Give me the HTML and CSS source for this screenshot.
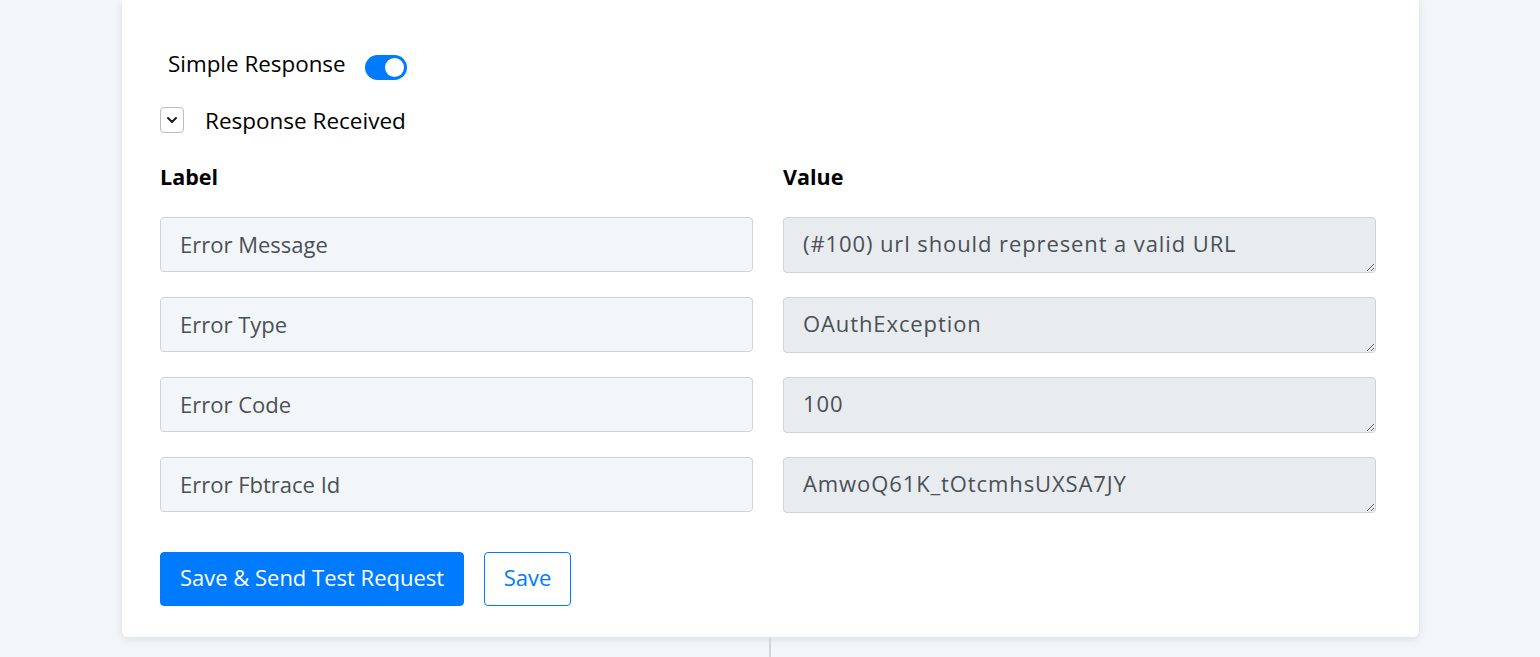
FILE: index.html
```html
<!DOCTYPE html>
<html lang="en">
<head>
<meta charset="utf-8">
<title>Response</title>
<link rel="stylesheet" href="styles.css">
</head>
<body>
<div class="page">
  <section class="card">
    <div class="toggle-row">
      <span class="toggle-label">Simple Response</span>
      <span class="switch" role="switch" aria-checked="true"><span class="knob"></span></span>
    </div>
    <div class="collapse-row">
      <button class="collapse-btn" type="button" aria-label="Collapse">
        <svg width="12" height="8" viewBox="0 0 12 8"><path d="M2 2 L6 6 L10 2" fill="none" stroke="#1a1a1a" stroke-width="2" stroke-linecap="round" stroke-linejoin="round"/></svg>
      </button>
      <span class="collapse-title">Response Received</span>
    </div>
    <div class="grid">
      <div class="col-head">Label</div>
      <div class="col-head">Value</div>

      <input class="field" type="text" value="Error Message">
      <textarea class="value" readonly>(#100) url should represent a valid URL</textarea>

      <input class="field" type="text" value="Error Type">
      <textarea class="value" readonly>OAuthException</textarea>

      <input class="field" type="text" value="Error Code">
      <textarea class="value" readonly>100</textarea>

      <input class="field" type="text" value="Error Fbtrace Id">
      <textarea class="value" readonly>AmwoQ61K_tOtcmhsUXSA7JY</textarea>
    </div>
    <div class="actions">
      <button class="btn btn-primary" type="button">Save &amp; Send Test Request</button>
      <button class="btn btn-outline" type="button">Save</button>
    </div>
  </section>
  <div class="connector"></div>
</div>
</body>
</html>
```

FILE: styles.css
```css
* { box-sizing: border-box; }

html, body {
  margin: 0;
  height: 100%;
}

body {
  background: #f3f6f9;
  font-family: "Open Sans", "Lato", sans-serif;
  color: #000;
  overflow: hidden;
}

.page {
  padding-left: 122px;
}

.card {
  width: 1297px;
  background: #fff;
  border-radius: 0 0 6px 6px;
  box-shadow: 0 2px 8px rgba(40, 55, 80, 0.12);
  padding: 50px 43px 31px 38px;
}

.toggle-row {
  display: flex;
  align-items: center;
  gap: 19px;
  padding-left: 8px;
  height: 30px;
}

.toggle-label {
  font-size: 22.4px;
  margin-top: -3px;
}

.switch {
  position: relative;
  display: inline-block;
  width: 42px;
  height: 25px;
  border-radius: 13px;
  background: #007bff;
  margin-top: 4px;
}

.knob {
  position: absolute;
  top: 3px;
  right: 3px;
  width: 19px;
  height: 19px;
  border-radius: 50%;
  background: #fff;
}

.collapse-row {
  display: flex;
  align-items: center;
  gap: 21px;
  margin-top: 27px;
  height: 26px;
}

.collapse-btn {
  width: 24px;
  height: 26px;
  border: 1px solid #b8bec6;
  border-radius: 4px;
  background: #fff;
  padding: 0;
  display: flex;
  align-items: center;
  justify-content: center;
}

.collapse-title {
  font-size: 22.5px;
  margin-top: 1px;
}

.grid {
  display: grid;
  grid-template-columns: 593px 593px;
  column-gap: 30px;
  row-gap: 24px;
  align-items: start;
  margin-top: 30px;
}

.col-head {
  font-size: 21.5px;
  font-weight: 700;
  height: 30px;
  line-height: 28px;
}

.field, .value {
  font-family: inherit;
  font-size: 22px;
  color: #495057;
  border: 1px solid #ced4da;
  border-radius: 4px;
  padding: 0 19px;
  margin: 0;
  outline: none;
}

.field {
  height: 55px;
  background: #f3f6f9;
  padding-bottom: 2px;
}

.value {
  height: 56px;
  background: #e9ecef;
  padding-top: 10px;
  line-height: 30px;
  letter-spacing: 0.9px;
  resize: vertical;
  overflow: hidden;
}

.actions {
  display: flex;
  gap: 20px;
  margin-top: 39px;
}

.btn {
  font-family: inherit;
  font-size: 22px;
  height: 54px;
  border-radius: 4px;
  padding: 0 10px 4px;
  cursor: pointer;
}

.btn-primary {
  background: #007bff;
  border: 1px solid #007bff;
  color: #fff;
  width: 304px;
}

.btn-outline {
  background: #fff;
  border: 1px solid #007bff;
  color: #007bff;
  width: 87px;
}

.connector {
  width: 2px;
  height: 40px;
  background: #d3d7dd;
  margin-left: 647px;
}
```
